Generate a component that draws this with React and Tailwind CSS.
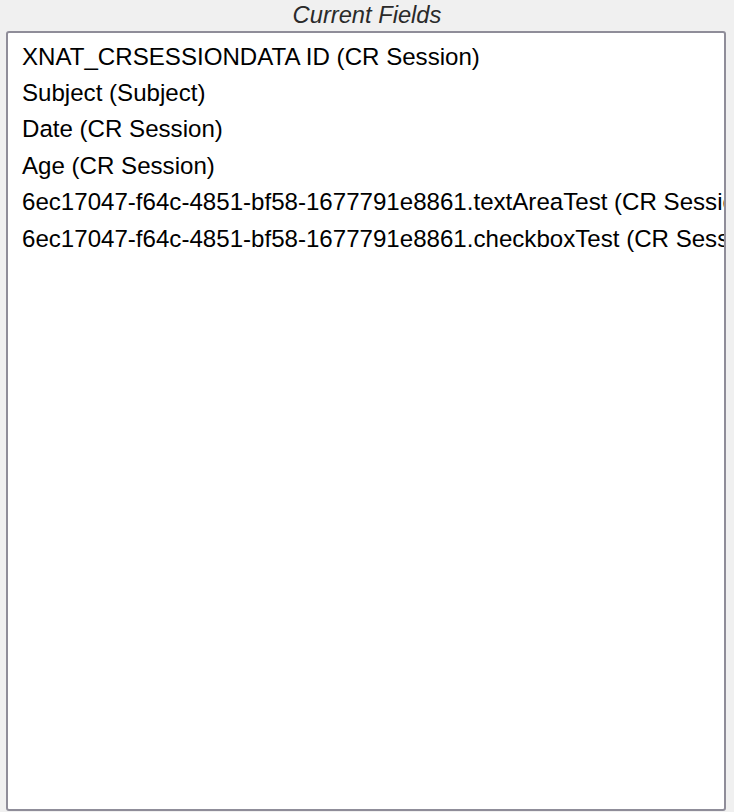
import React from 'react'

const fields = [
    'XNAT_CRSESSIONDATA ID (CR Session)',
    'Subject (Subject)',
    'Date (CR Session)',
    'Age (CR Session)',
    '6ec17047-f64c-4851-bf58-1677791e8861.textAreaTest (CR Session)',
    '6ec17047-f64c-4851-bf58-1677791e8861.checkboxTest (CR Session)',
]

export default function App() {
    return (
        <div
            className="h-[812px] w-[734px] bg-[#f0f0f0] flex flex-col"
            style={{ fontFamily: '"Liberation Sans", Arial, sans-serif' }}
        >
            {/* Title */}
            <div className="h-[31px] leading-[31px] text-center italic text-[23.7px] text-[#2a2a2a]">
                Current Fields
            </div>

            {/* Field list, clipped at the right edge like a listbox */}
            <div className="ml-[6px] w-[720px] h-[780px] bg-white border-2 border-[#8f8d99] rounded-[3px] overflow-hidden pt-[5.5px] pl-[14px]">
                {fields.map((f) => (
                    <div key={f} className="whitespace-nowrap text-[24.1px] leading-[36.4px] text-black">
                        {f}
                    </div>
                ))}
            </div>
        </div>
    )
}
